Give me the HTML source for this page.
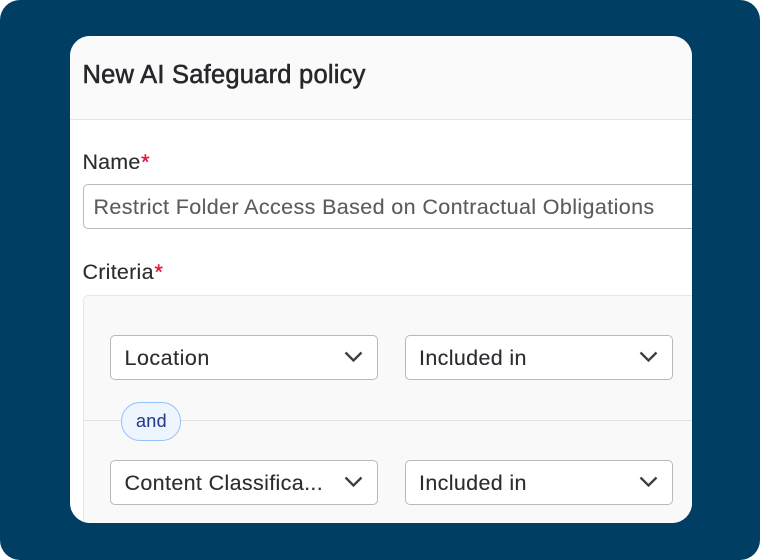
<!DOCTYPE html>
<html>
<head>
<meta charset="utf-8">
<style>
html,body{margin:0;padding:0;background:#fff;}
body{width:760px;height:560px;overflow:hidden;position:relative;font-family:"Liberation Sans",sans-serif;}
.bg{position:absolute;left:0;top:0;width:760px;height:560px;background:#003f63;border-radius:20px;}
.card{position:absolute;left:70px;top:36px;width:622px;height:487px;background:#fff;border-radius:20px;overflow:hidden;}
.head{position:absolute;left:0;top:0;width:622px;height:83px;background:#fafafa;border-bottom:1px solid #e3e3e8;}
.t{position:absolute;white-space:nowrap;line-height:24px;color:#2b2c30;font-size:21.5px;letter-spacing:.36px;-webkit-text-stroke:.12px currentColor;}
.sel{position:absolute;box-sizing:border-box;width:268.5px;height:45px;background:#fff;border:1.5px solid #b8b8bd;border-radius:5px;}
.sel svg{position:absolute;right:14.5px;top:15px;}
.box{position:absolute;left:12.5px;top:258.5px;width:640px;height:260px;box-sizing:border-box;background:#f9f9fa;border:1.5px solid #e6e6e8;border-radius:5px;}
.line{position:absolute;left:13px;top:383.5px;width:609px;height:1px;background:#e2e2e4;}
.pill{position:absolute;left:51px;top:366px;width:60px;height:38.5px;box-sizing:border-box;background:#eef5fe;border:1.7px solid #93c2fb;border-radius:19px;}
.r{color:#e8173c;-webkit-text-stroke:.4px #e8173c;margin-left:.7px;}
</style>
</head>
<body>
<div class="bg"></div>
<div class="card">
  <div class="head"></div>
  <div class="t" style="left:12.5px;top:27px;font-size:25.5px;letter-spacing:.23px;-webkit-text-stroke:.55px #26272b;color:#26272b;">New AI Safeguard policy</div>
  <div class="t" style="left:12.5px;top:113.5px;letter-spacing:.15px;">Name<span class="r">*</span></div>
  <div style="position:absolute;left:12.5px;top:148px;width:640px;height:45px;box-sizing:border-box;background:#fff;border:1.5px solid #b8b8bd;border-radius:5px;"></div>
  <div class="t" style="left:23.5px;top:158.5px;color:#5c5c60;letter-spacing:.38px;">Restrict Folder Access Based on Contractual Obligations</div>
  <div class="t" style="left:12.5px;top:223.5px;letter-spacing:.25px;">Criteria<span class="r">*</span></div>
  <div class="box"></div>
  <div class="line"></div>

  <div class="sel" style="left:40px;top:299px;width:268px;"><svg width="19" height="12" viewBox="0 0 19 12"><path d="M1.5 1.5 L9.5 9.5 L17.5 1.5" fill="none" stroke="#3d3d42" stroke-width="2.3"/></svg></div>
  <div class="t" style="left:54.5px;top:309.5px;letter-spacing:.5px;">Location</div>
  <div class="sel" style="left:334.5px;top:299px;"><svg width="19" height="12" viewBox="0 0 19 12"><path d="M1.5 1.5 L9.5 9.5 L17.5 1.5" fill="none" stroke="#3d3d42" stroke-width="2.3"/></svg></div>
  <div class="t" style="left:349px;top:309.5px;letter-spacing:.35px;">Included in</div>

  <div class="pill"></div>
  <div class="t" style="left:66px;top:373px;font-size:18px;letter-spacing:.3px;color:#27408f;">and</div>

  <div class="sel" style="left:40px;top:424px;width:268px;"><svg width="19" height="12" viewBox="0 0 19 12"><path d="M1.5 1.5 L9.5 9.5 L17.5 1.5" fill="none" stroke="#3d3d42" stroke-width="2.3"/></svg></div>
  <div class="t" style="left:54.5px;top:434.5px;letter-spacing:.35px;">Content Classifica...</div>
  <div class="sel" style="left:334.5px;top:424px;"><svg width="19" height="12" viewBox="0 0 19 12"><path d="M1.5 1.5 L9.5 9.5 L17.5 1.5" fill="none" stroke="#3d3d42" stroke-width="2.3"/></svg></div>
  <div class="t" style="left:349px;top:434.5px;letter-spacing:.35px;">Included in</div>
</div>
</body>
</html>
